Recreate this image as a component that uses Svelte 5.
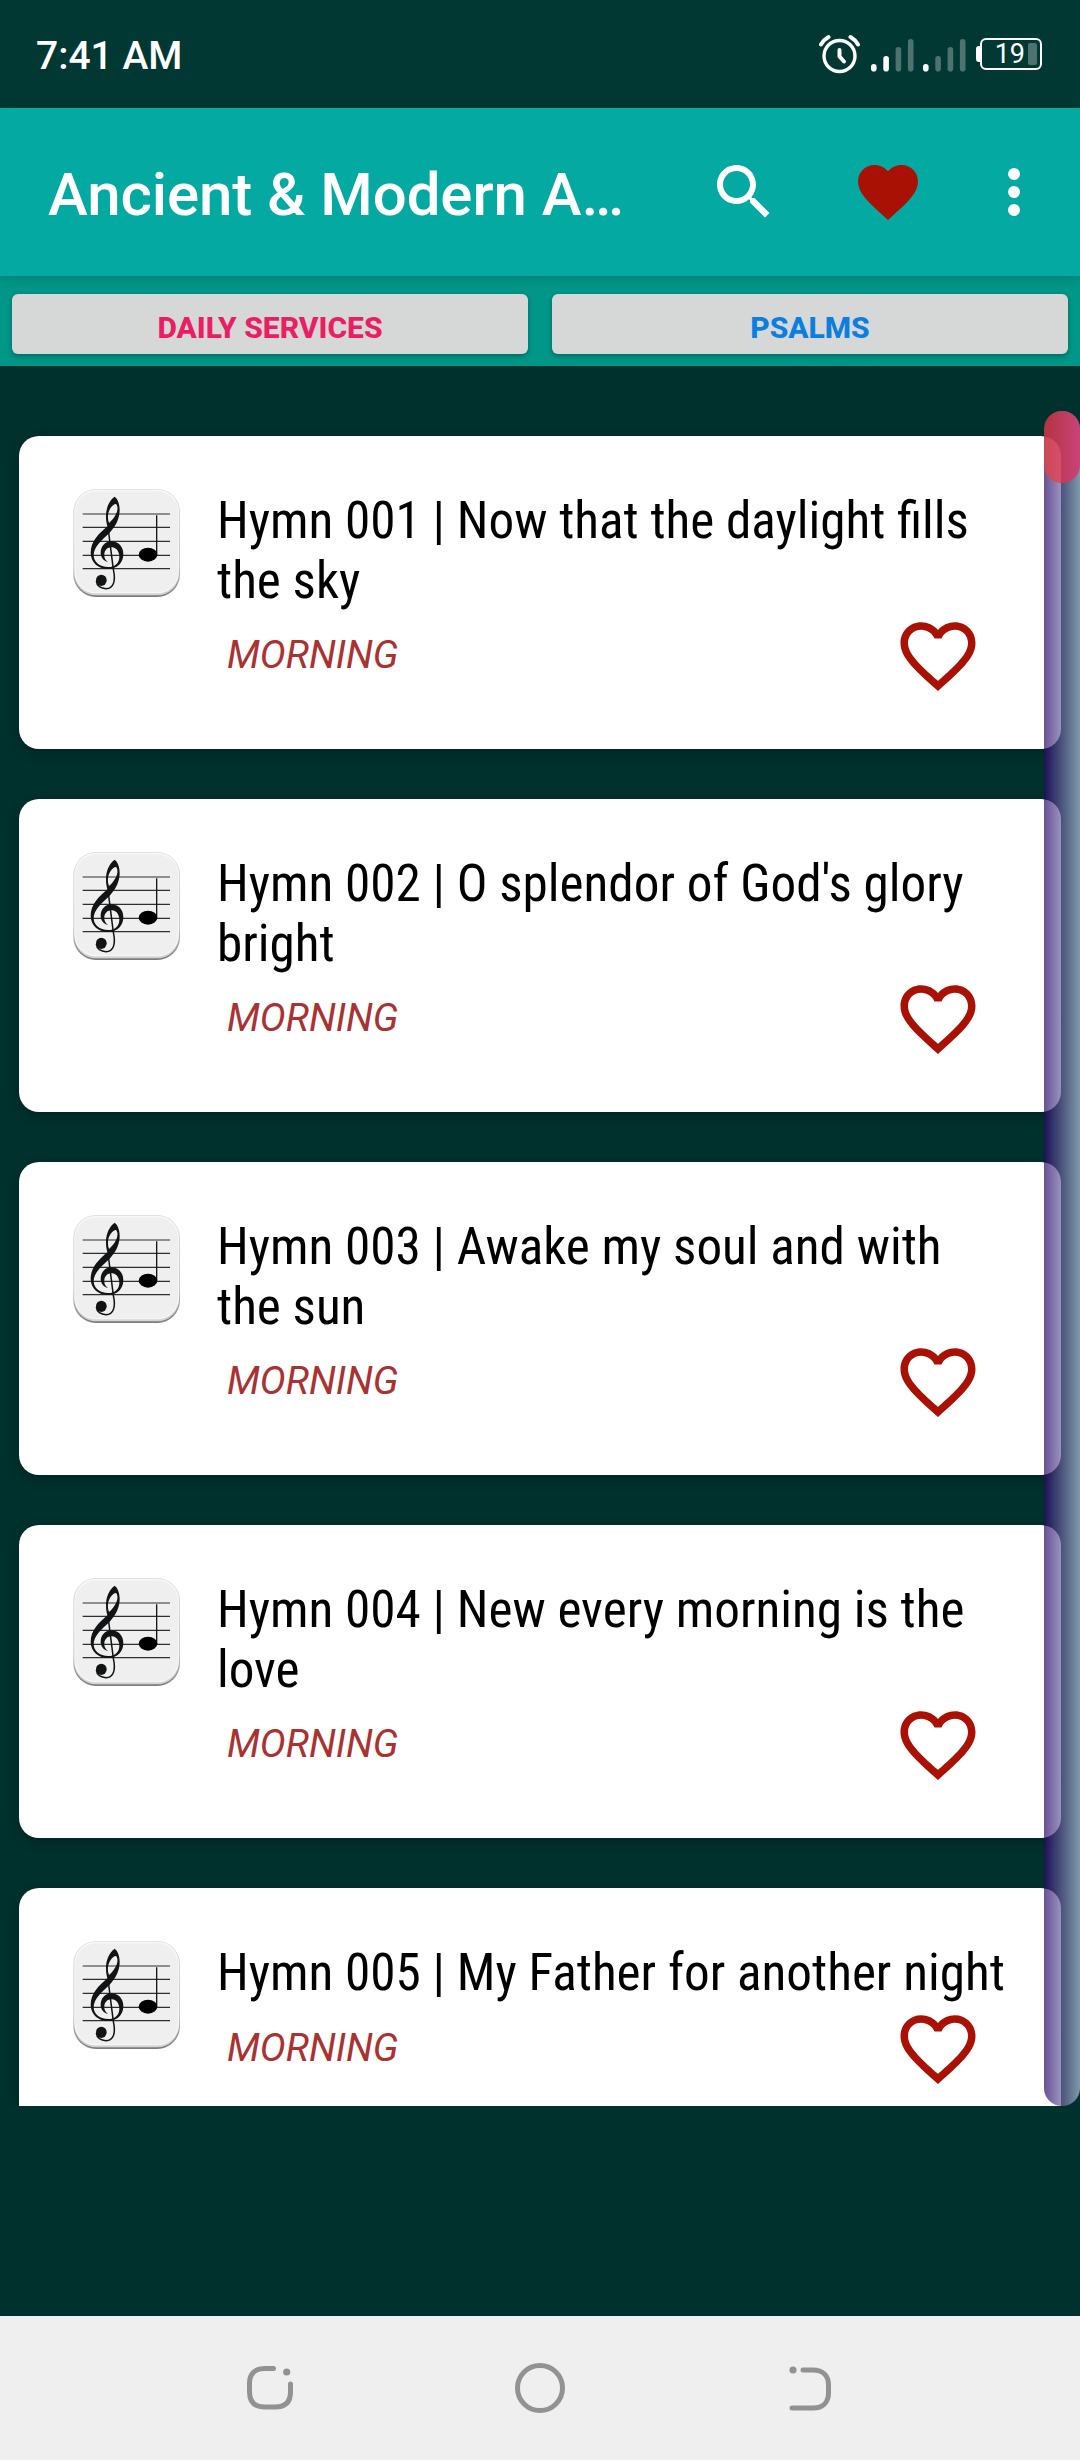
<script lang="ts">
  interface Hymn {
    number: string;
    title: string;
    category: string;
  }

  const hymns: Hymn[] = [
    { number: "001", title: "Now that the daylight fills the sky", category: "MORNING" },
    { number: "002", title: "O splendor of God's glory bright", category: "MORNING" },
    { number: "003", title: "Awake my soul and with the sun", category: "MORNING" },
    { number: "004", title: "New every morning is the love", category: "MORNING" },
    { number: "005", title: "My Father for another night", category: "MORNING" },
  ];

  const signals = [2, 1];
  const barTops = [26, 18, 9, 1];
  const staffLines = [132, 172, 214, 256, 296];
</script>

<div class="screen">
  <div class="status-bar">
    <span class="time">7:41 AM</span>
    <div class="status-icons">
      <svg class="alarm" width="42" height="40" viewBox="0 0 42 40" fill="none" stroke="#fff" stroke-linecap="round">
        <circle cx="20.5" cy="22" r="15.5" stroke-width="3.4" />
        <path d="M20.5 16v6.5l4.500 5" stroke-width="4" stroke-linejoin="round" />
        <path d="M2 10.500Q5 5.500 9.500 3M39 10.500Q36 5.500 31.500 3" stroke-width="4" />
      </svg>
      {#each signals as level}
        <svg class="signal" width="43" height="34" viewBox="0 0 43 34">
          {#each barTops as top, i}
            <rect x={i * 12.3} y={top} width="5.6" height={33.5 - top} rx="2.8" fill={i < level ? "#fff" : "#4e736f"} />
          {/each}
        </svg>
      {/each}
      <div class="battery">
        <span class="nub"></span>
        <div class="cell">
          <span class="percent">19</span>
          <span class="charge"></span>
        </div>
      </div>
    </div>
  </div>

  <header class="toolbar">
    <h1>Ancient &amp; Modern A…</h1>
    <button type="button" class="action search" aria-label="Search">
      <svg viewBox="0 0 24 24" fill="#fff">
        <path d="M15.500 14h-.79l-.28-.27C15.410 12.590 16 11.110 16 9.500 16 5.910 13.090 3 9.500 3S3 5.910 3 9.500 5.910 16 9.500 16c1.610 0 3.090-.59 4.230-1.570l.27.28v.79l5 4.990L20.490 19l-4.990-5zm-6 0C7.010 14 5 11.990 5 9.500S7.010 5 9.500 5 14 7.010 14 9.500 11.990 14 9.500 14z" />
      </svg>
    </button>
    <button type="button" class="action favorites" aria-label="Favorites">
      <svg viewBox="0 0 24 24" fill="#aa1105">
        <path d="M12 21.350l-1.450-1.320C5.400 15.360 2 12.280 2 8.500 2 5.420 4.420 3 7.500 3c1.740 0 3.410.81 4.500 2.090C13.090 3.810 14.760 3 16.500 3 19.580 3 22 5.420 22 8.500c0 3.780-3.400 6.860-8.550 11.540L12 21.350z" />
      </svg>
    </button>
    <button type="button" class="action" aria-label="More">
      <svg viewBox="0 0 24 24" fill="#fff">
        <circle cx="12" cy="6" r="2" />
        <circle cx="12" cy="12" r="2" />
        <circle cx="12" cy="18" r="2" />
      </svg>
    </button>
  </header>

  <div class="tabs">
    <button type="button" class="tab daily">DAILY SERVICES</button>
    <button type="button" class="tab psalms">PSALMS</button>
  </div>

  <main class="list">
    {#each hymns as hymn (hymn.number)}
      <article class="card">
        <svg class="score" width="112" height="116" viewBox="36 48 336 348">
          <defs>
            <linearGradient id="edge-{hymn.number}" x1="0" y1="0" x2="0" y2="1">
              <stop offset="0" stop-color="#dedede" />
              <stop offset="0.7" stop-color="#c4c4c4" />
              <stop offset="1" stop-color="#7c7c7c" />
            </linearGradient>
          </defs>
          <rect x="40" y="57" width="320" height="324" rx="68" fill="url(#edge-{hymn.number})" />
          <rect x="43" y="59" width="314" height="317" rx="66" fill="#d4d4d4" />
          <rect x="43" y="59" width="314" height="311" rx="65" fill="#f8f8f8" />
          <rect x="46" y="64" width="308" height="303" rx="62" fill="#efefef" />
          {#each staffLines as y}
            <path d="M68 {y}H330" stroke="#2e2e2e" stroke-width="3.4" />
          {/each}
          <path
            fill="#111314"
            fill-rule="evenodd"
            d="M164 80C148 91 137 114 138 142C138 152 140 161 142 169C118 190 92 213 92 248C92 278 116 297 145 297C172 297 190 278 190 252C190 230 175 214 153 214C135 214 122 230 122 248C122 262 131 273 144 276C135 269 132 262 133 252C134 240 143 231 156 232C170 233 178 246 178 260C178 279 165 291 145 291C118 291 101 275 101 256C101 231 123 212 149 188C168 168 179 145 179 120C179 102 173 86 164 80ZM170 104C178 119 166 142 147 159C139 137 147 115 160 105C165 102 169 101 170 104Z" />
          <path d="M144 172L160 298C168 334 160 356 138 356C123 356 110 348 109 333" fill="none" stroke="#111314" stroke-width="4.5" />
          <ellipse cx="124" cy="331" rx="16" ry="17" fill="#111314" />
          <path d="M290 136V254" stroke="#161616" stroke-width="4" />
          <ellipse cx="264" cy="254" rx="28" ry="21" fill="#000" />
        </svg>
        <div class="details">
          <h2>Hymn {hymn.number} | {hymn.title}</h2>
          <div class="meta">
            <span class="category">{hymn.category}</span>
            <svg class="heart" width="90" height="90" viewBox="0 0 24 24" fill="#aa1105">
              <path d="M16.500 3c-1.740 0-3.410.81-4.500 2.090C10.910 3.810 9.240 3 7.500 3 4.420 3 2 5.420 2 8.500c0 3.780 3.400 6.860 8.550 11.540L12 21.350l1.450-1.320C18.600 15.360 22 12.280 22 8.500 22 5.420 19.580 3 16.500 3zm-4.400 15.550l-.1.1-.1-.1C7.140 14.240 4 11.390 4 8.500 4 6.500 5.500 5 7.500 5c1.540 0 3.040.99 3.570 2.360h1.870C13.460 5.990 14.960 5 16.500 5c2 0 3.500 1.500 3.500 3.500 0 2.890-3.140 5.740-7.900 10.050z" />
            </svg>
          </div>
        </div>
      </article>
    {/each}
    <div class="scroll-track">
      <div class="scroll-thumb"></div>
    </div>
  </main>

  <nav class="nav-bar">
    <svg width="54" height="54" viewBox="0 0 54 54">
      <path d="M30.500 7.500H22C12 7.500 6.500 13 6.500 22V31C6.500 41 12 46 22 46H32C42 46 47.500 41 47.500 31V23" />
      <circle class="dot" cx="43.700" cy="11" r="3.600" />
    </svg>
    <svg width="54" height="54" viewBox="0 0 54 54">
      <circle cx="27" cy="27" r="22.500" />
    </svg>
    <svg width="54" height="54" viewBox="0 0 54 54">
      <path d="M20 9H30C40 9 45.500 15 45.500 24V32C45.500 41 40 47 30 47H9" />
      <circle class="dot" cx="10" cy="9" r="3.600" />
    </svg>
  </nav>
</div>

<style>
  :global(body) {
    margin: 0;
    background: #00312d;
  }
  .screen {
    display: flex;
    flex-direction: column;
    width: 1080px;
    height: 2460px;
    overflow: hidden;
    background: #00312d;
    font-family: Roboto, "Liberation Sans", sans-serif;
  }
  svg {
    display: block;
    flex: none;
  }
  button {
    border: none;
    padding: 0;
    font: inherit;
  }

  .status-bar {
    display: flex;
    align-items: center;
    justify-content: space-between;
    box-sizing: border-box;
    height: 108px;
    padding: 0 38px 0 36px;
    background: #013833;
    color: #fff;
  }
  .time {
    font-size: 39px;
    font-weight: 500;
    padding-top: 3px;
  }
  .status-icons {
    display: flex;
    align-items: center;
  }
  .alarm {
    margin-right: 10px;
  }
  .signal {
    margin: 2px 8.5px 0 0;
  }
  .battery {
    display: flex;
    align-items: center;
    margin-left: 2px;
  }
  .nub {
    width: 4px;
    height: 16px;
    border-radius: 3px 0 0 3px;
    background: #fff;
  }
  .cell {
    display: flex;
    align-items: center;
    justify-content: flex-end;
    gap: 3px;
    box-sizing: border-box;
    width: 62px;
    height: 32px;
    padding-right: 3px;
    border: 2.5px solid #fff;
    border-radius: 6px;
  }
  .percent {
    font-size: 27px;
    line-height: 28px;
  }
  .charge {
    width: 9px;
    height: 22px;
    border-radius: 2px;
    background: #4e736f;
  }

  .toolbar {
    position: relative;
    z-index: 1;
    display: flex;
    align-items: center;
    box-sizing: border-box;
    height: 168px;
    padding: 0 30px 0 48px;
    background: #04a9a2;
    box-shadow: 0 2px 12px rgba(0, 0, 0, 0.15);
  }
  h1 {
    flex: 1;
    margin: 0;
    padding-top: 4px;
    color: #fff;
    font-size: 60px;
    font-weight: 500;
    letter-spacing: -0.08px;
    white-space: nowrap;
  }
  .action {
    width: 72px;
    height: 72px;
    background: none;
  }
  .search {
    margin-right: 72px;
  }
  .favorites {
    margin-right: 54px;
  }

  .tabs {
    display: grid;
    grid-template-columns: 1fr 1fr;
    gap: 24px;
    box-sizing: border-box;
    height: 90px;
    padding: 18px 12px 12px;
    background: #009688;
  }
  .tab {
    padding-top: 6px;
    border-radius: 6px;
    background: #d6d7d7;
    box-shadow: 0 2px 5px rgba(0, 0, 0, 0.3);
    font-size: 30px;
    font-weight: 800;
  }
  .daily {
    color: #e91e63;
  }
  .psalms {
    color: #0a7fdf;
  }

  .list {
    position: relative;
    display: flex;
    flex-direction: column;
    gap: 50px;
    box-sizing: border-box;
    height: 1695px;
    margin-top: 45px;
    padding: 25px 19px 0;
    overflow: hidden;
  }
  .card {
    display: flex;
    flex: none;
    align-items: flex-start;
    box-sizing: border-box;
    padding: 50px 48px 48px 53px;
    border-radius: 20px;
    background: #fff;
    box-shadow: 0 4px 12px rgba(0, 0, 0, 0.25);
  }
  .details {
    flex: 1;
    min-width: 0;
    margin-left: 33px;
    padding-top: 5px;
  }
  h2 {
    margin: 0 0 1px;
    color: #000;
    font-size: 51.17px;
    font-weight: 400;
    font-stretch: 75%;
    line-height: 59.5px;
  }
  .meta {
    display: flex;
    align-items: flex-start;
    justify-content: space-between;
    padding-right: 30px;
  }
  .category {
    padding: 21px 0 0 10px;
    color: #a93232;
    font-size: 38.8px;
    font-style: italic;
    line-height: 46px;
  }

  .scroll-track {
    position: absolute;
    top: 0;
    right: 0;
    bottom: 0;
    width: 36px;
    border-radius: 18px;
    background: linear-gradient(90deg, rgba(38, 5, 102, 0.69), rgba(184, 200, 225, 0.69));
  }
  .scroll-thumb {
    height: 72px;
    border-radius: 18px;
    background: linear-gradient(90deg, rgba(244, 67, 54, 0.7), rgba(233, 30, 99, 0.7));
  }

  .nav-bar {
    display: grid;
    grid-template-columns: repeat(3, 270px);
    place-content: center;
    justify-items: center;
    height: 144px;
    margin-top: auto;
    background: #efefef;
  }
  .nav-bar svg {
    fill: none;
    stroke: #929292;
    stroke-width: 5;
    stroke-linecap: round;
  }
  .nav-bar .dot {
    fill: #929292;
    stroke: none;
  }
</style>
